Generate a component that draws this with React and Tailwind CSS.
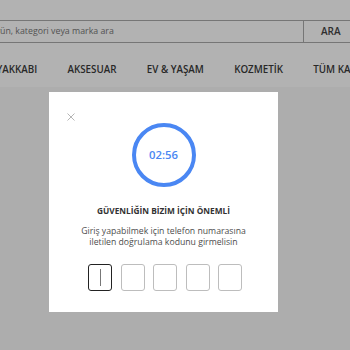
export default function App() {
  const font = { fontFamily: '"Open Sans", "Noto Sans", sans-serif' };
  return (
    <div className="relative w-[350px] h-[350px] overflow-hidden bg-[#f8f8f8]" style={font}>
      <div className="bg-white h-[87px] flex flex-col">
        <div className="h-[20px]" />
        <div className="flex h-[23px] ml-[-40px] w-[430px] border border-[#aaaaaa]">
          <div className="flex-1 flex items-center pl-[29px] text-[8.8px] text-[#777]">
            Ürün, kategori veya marka ara
          </div>
          <div className="w-[86px] border-l border-[#aaaaaa] flex items-center pl-[17px] text-[10px] font-semibold text-[#444]">
            ARA
          </div>
        </div>
        <div className="flex gap-[30.3px] ml-[-10px] mt-[20px] text-[9.8px] font-semibold text-[#3a3a3a] whitespace-nowrap">
          <span>AYAKKABI</span>
          <span>AKSESUAR</span>
          <span>EV &amp; YAŞAM</span>
          <span>KOZMETİK</span>
          <span>TÜM KATEGORİLER</span>
        </div>
      </div>

      <div className="absolute inset-0 bg-black/30 pt-[92px] pl-[49px]">
        <div className="w-[229px] h-[220px] bg-white flex flex-col items-center relative">
          <svg className="absolute left-[18px] top-[21px]" width="8" height="8" viewBox="0 0 8 8">
            <path d="M0.5 0.5 L7.5 7.5 M7.5 0.5 L0.5 7.5" stroke="#b5b5b5" strokeWidth="1" />
          </svg>
          <div className="mt-[31px] w-[64px] h-[64px] rounded-full border-[4px] border-[#4a87f3] flex items-center justify-center text-[11.3px] font-semibold text-[#4a87f3]">
            02:56
          </div>
          <div className="mt-[18px] text-[8.3px] font-bold text-[#333]">
            GÜVENLİĞİN BİZİM İÇİN ÖNEMLİ
          </div>
          <div className="mt-[9px] text-[8.7px] leading-[11px] text-[#4d4d4d] text-center">
            Giriş yapabilmek için telefon numarasına
            <br />
            iletilen doğrulama kodunu girmelisin
          </div>
          <div className="mt-[16px] flex gap-[8.5px] ml-[3px]">
            <div className="w-[24px] h-[27px] rounded-[3px] border-[1.5px] border-[#222] flex items-center justify-center">
              <div className="w-[1px] h-[17px] bg-[#777]" />
            </div>
            <div className="w-[24px] h-[27px] rounded-[3px] border border-[#bdbdbd]" />
            <div className="w-[24px] h-[27px] rounded-[3px] border border-[#bdbdbd]" />
            <div className="w-[24px] h-[27px] rounded-[3px] border border-[#bdbdbd]" />
            <div className="w-[24px] h-[27px] rounded-[3px] border border-[#bdbdbd]" />
          </div>
        </div>
      </div>
    </div>
  );
}
